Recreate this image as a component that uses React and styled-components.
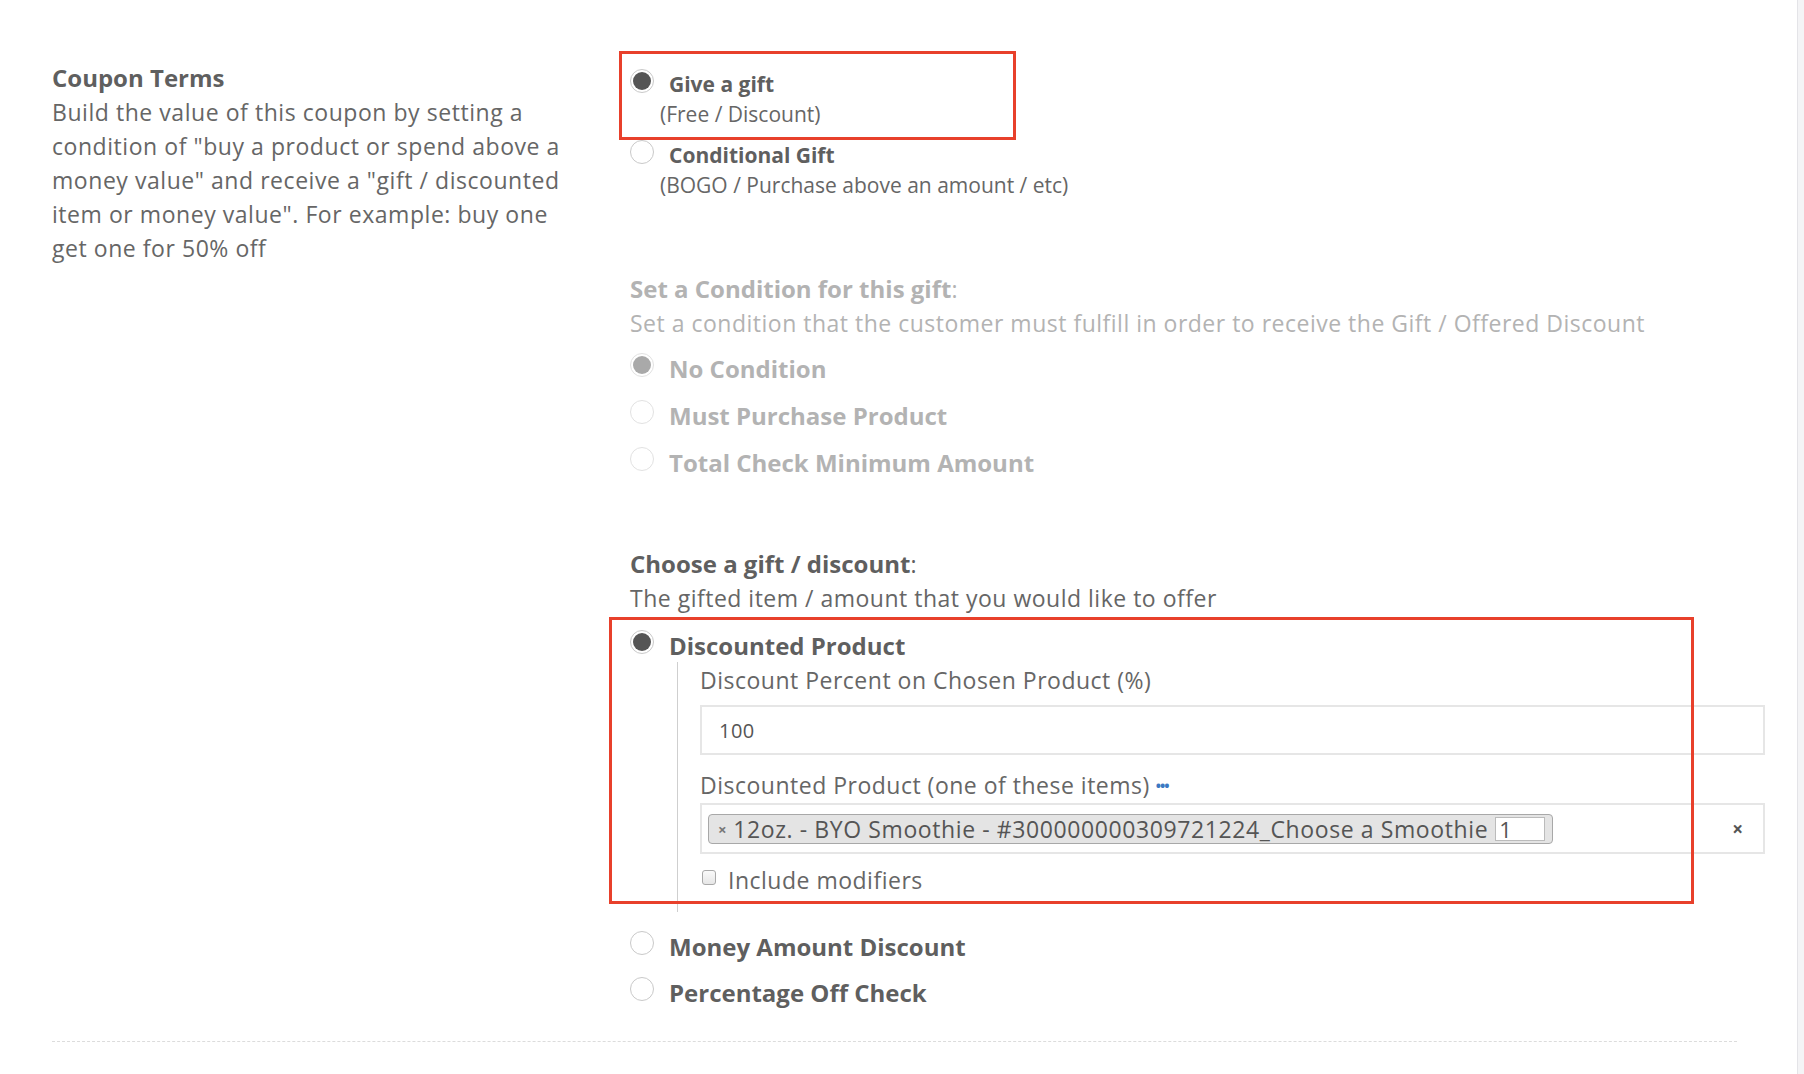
import React from 'react'
import styled, { createGlobalStyle } from 'styled-components'

const GlobalStyle = createGlobalStyle`
  html, body {
    margin: 0;
    padding: 0;
    background: #fff;
  }
  body {
    font-family: 'Open Sans', 'Liberation Sans', sans-serif;
    color: #666;
  }
`

const Page = styled.div`
  display: flex;
  width: 1804px;
  height: 1074px;
  overflow: hidden;
`

const Main = styled.div`
  flex: 1;
  padding: 0 0 0 52px;
`

const ScrollEdge = styled.div`
  width: 6px;
  border-left: 1px solid #e4e4e8;
  background: #f4f4f6;
`

const Section = styled.div`
  display: flex;
  padding-right: 32px;
`

const Intro = styled.div`
  width: 520px;
  margin-right: 58px;
  padding-top: 61px;
  font-size: 23px;
  letter-spacing: 0.55px;
  line-height: 34px;
  color: #666;
`

const IntroTitle = styled.div`
  font-weight: 700;
  font-size: 24px;
  letter-spacing: 0;
  color: #5f5f5f;
`

const Fields = styled.div`
  flex: 1;
  padding-top: 69px;
`

const OptionGroup = styled.div`
  position: relative;
  margin-top: ${(p) => p.$top || 0}px;
`

const Highlight = styled.div`
  position: absolute;
  left: ${(p) => p.$left}px;
  top: ${(p) => p.$top}px;
  width: ${(p) => p.$width}px;
  height: ${(p) => p.$height}px;
  border: 3px solid #e8402b;
  box-sizing: border-box;
  pointer-events: none;
`

const OptionRow = styled.div`
  display: flex;
  align-items: center;
  gap: 15px;
  height: ${(p) => p.$height || 30}px;
`

const Radio = styled.span`
  position: relative;
  width: 24px;
  height: 24px;
  flex: none;
  margin-top: -6px;
  border-radius: 50%;
  border: 1.5px solid ${(p) => (p.$disabled ? '#e2e2e2' : '#c9c9c9')};
  box-sizing: border-box;
  background: #fff;
  &::after {
    content: '';
    display: ${(p) => (p.$checked ? 'block' : 'none')};
    position: absolute;
    inset: 2px;
    border-radius: 50%;
    background: ${(p) => (p.$disabled ? '#a9a9a9' : '#555')};
  }
`

const OptionLabel = styled.span`
  font-weight: 700;
  font-size: ${(p) => p.$size || 21}px;
  color: ${(p) => (p.$disabled ? '#b3b3b3' : '#5f5f5f')};
  white-space: nowrap;
`

const OptionHint = styled.div`
  padding-left: 30px;
  font-size: 21px;
  line-height: 30px;
  color: #666;
`

const Heading = styled.div`
  margin-top: ${(p) => p.$top}px;
  font-size: 23px;
  letter-spacing: 0.5px;
  line-height: 34px;
  color: ${(p) => (p.$disabled ? '#b3b3b3' : '#5f5f5f')};
`

const HeadingTitle = styled.span`
  font-weight: 700;
  font-size: 24px;
  letter-spacing: 0;
`

const HeadingText = styled.div`
  color: ${(p) => (p.$disabled ? '#b3b3b3' : '#666')};
`

const RadioList = styled.div`
  display: flex;
  flex-direction: column;
  gap: ${(p) => p.$gap || 13}px;
  margin-top: ${(p) => p.$top || 0}px;
`

const Nested = styled.div`
  margin-left: 47px;
  padding: 3px 0 17px 22px;
  border-left: 1px solid #cfcfcf;
`

const FieldLabel = styled.div`
  margin-top: ${(p) => p.$top || 0}px;
  font-size: 23px;
  letter-spacing: 0.5px;
  line-height: 30px;
  color: #666;
`

const Dots = styled.span`
  margin-left: 6px;
  color: #3b78c2;
  font-size: 14px;
  font-weight: 700;
  letter-spacing: -1px;
  vertical-align: 3px;
`

const TextInput = styled.div`
  margin-top: 10px;
  height: 50px;
  box-sizing: border-box;
  border: 2px solid #e6e6e6;
  display: flex;
  align-items: center;
  padding-left: 17px;
  font-size: 20px;
  letter-spacing: 0.5px;
  color: #555;
`

const Select = styled.div`
  margin-top: 2px;
  height: 51px;
  box-sizing: border-box;
  border: 2px solid #e6e6e6;
  display: flex;
  align-items: center;
  justify-content: space-between;
  padding: 0 20px 0 6px;
`

const Tag = styled.div`
  display: flex;
  align-items: center;
  height: 30px;
  box-sizing: border-box;
  padding: 0 7px 0 9px;
  border: 1px solid #a8a8a8;
  border-radius: 4px;
  background: #e4e4e4;
  font-size: 23px;
  letter-spacing: 0.6px;
  color: #555;
  white-space: nowrap;
`

const TagRemove = styled.span`
  font-size: 15px;
  font-weight: 700;
  color: #777;
  margin-right: 6px;
`

const QtyInput = styled.span`
  display: inline-flex;
  align-items: center;
  width: 50px;
  height: 24px;
  margin-left: 7px;
  box-sizing: border-box;
  border: 1px solid #bbb;
  background: #fff;
  padding-left: 3px;
  font-size: 22px;
  color: #555;
`

const ClearAll = styled.span`
  font-size: 19px;
  font-weight: 700;
  color: #555;
`

const CheckRow = styled.div`
  display: flex;
  align-items: center;
  gap: 12px;
  margin-top: 11px;
  height: 30px;
  padding-left: 2px;
  font-size: 23px;
  letter-spacing: 0.5px;
  color: #666;
`

const Checkbox = styled.span`
  width: 14px;
  height: 15px;
  margin-top: -6px;
  box-sizing: border-box;
  border: 1px solid #a9a9a9;
  border-radius: 3px;
  background: linear-gradient(#fafafa, #e6e6e6);
`

const Divider = styled.div`
  margin: 32px 60px 0 0;
  border-top: 1px dashed #dcdcdc;
`

const option = ({ label, checked, disabled, size, height }) => (
  <OptionRow key={label} $height={height}>
    <Radio $checked={checked} $disabled={disabled} />
    <OptionLabel $size={size} $disabled={disabled}>
      {label}
    </OptionLabel>
  </OptionRow>
)

const conditions = [
  { label: 'No Condition', checked: true },
  { label: 'Must Purchase Product' },
  { label: 'Total Check Minimum Amount' },
]

export default function App() {
  return (
    <Page>
      <GlobalStyle />
      <Main>
        <Section>
          <Intro>
            <IntroTitle>Coupon Terms</IntroTitle>
            Build the value of this coupon by setting a condition of "buy a
            product or spend above a money value" and receive a "gift /
            discounted item or money value". For example: buy one get one for
            50% off
          </Intro>
          <Fields>
            <OptionGroup>
              <Highlight $left={-11} $top={-18} $width={397} $height={89} />
              {option({ label: 'Give a gift', checked: true })}
              <OptionHint>(Free / Discount)</OptionHint>
            </OptionGroup>
            <OptionGroup $top={11}>
              {option({ label: 'Conditional Gift' })}
              <OptionHint>(BOGO / Purchase above an amount / etc)</OptionHint>
            </OptionGroup>

            <Heading $top={72} $disabled>
              <HeadingTitle>Set a Condition for this gift</HeadingTitle>:
              <HeadingText $disabled>
                Set a condition that the customer must fulfill in order to
                receive the Gift / Offered Discount
              </HeadingText>
            </Heading>
            <RadioList $top={11}>
              {conditions.map((c) =>
                option({ ...c, disabled: true, size: 24, height: 34 })
              )}
            </RadioList>

            <Heading $top={68}>
              <HeadingTitle>Choose a gift / discount</HeadingTitle>:
              <HeadingText>
                The gifted item / amount that you would like to offer
              </HeadingText>
            </Heading>
            <OptionGroup $top={13}>
              <Highlight $left={-21} $top={-11} $width={1085} $height={287} />
              {option({
                label: 'Discounted Product',
                checked: true,
                size: 24,
                height: 34,
              })}
              <Nested>
                <FieldLabel>Discount Percent on Chosen Product (%)</FieldLabel>
                <TextInput>100</TextInput>
                <FieldLabel $top={15}>
                  Discounted Product (one of these items)
                  <Dots>•••</Dots>
                </FieldLabel>
                <Select>
                  <Tag>
                    <TagRemove>×</TagRemove>
                    12oz. - BYO Smoothie - #300000000309721224_Choose a Smoothie
                    <QtyInput>1</QtyInput>
                  </Tag>
                  <ClearAll>×</ClearAll>
                </Select>
                <CheckRow>
                  <Checkbox />
                  Include modifiers
                </CheckRow>
              </Nested>
            </OptionGroup>
            <RadioList $top={17} $gap={12}>
              {option({ label: 'Money Amount Discount', size: 24, height: 34 })}
              {option({ label: 'Percentage Off Check', size: 24, height: 34 })}
            </RadioList>
          </Fields>
        </Section>
        <Divider />
      </Main>
      <ScrollEdge />
    </Page>
  )
}
